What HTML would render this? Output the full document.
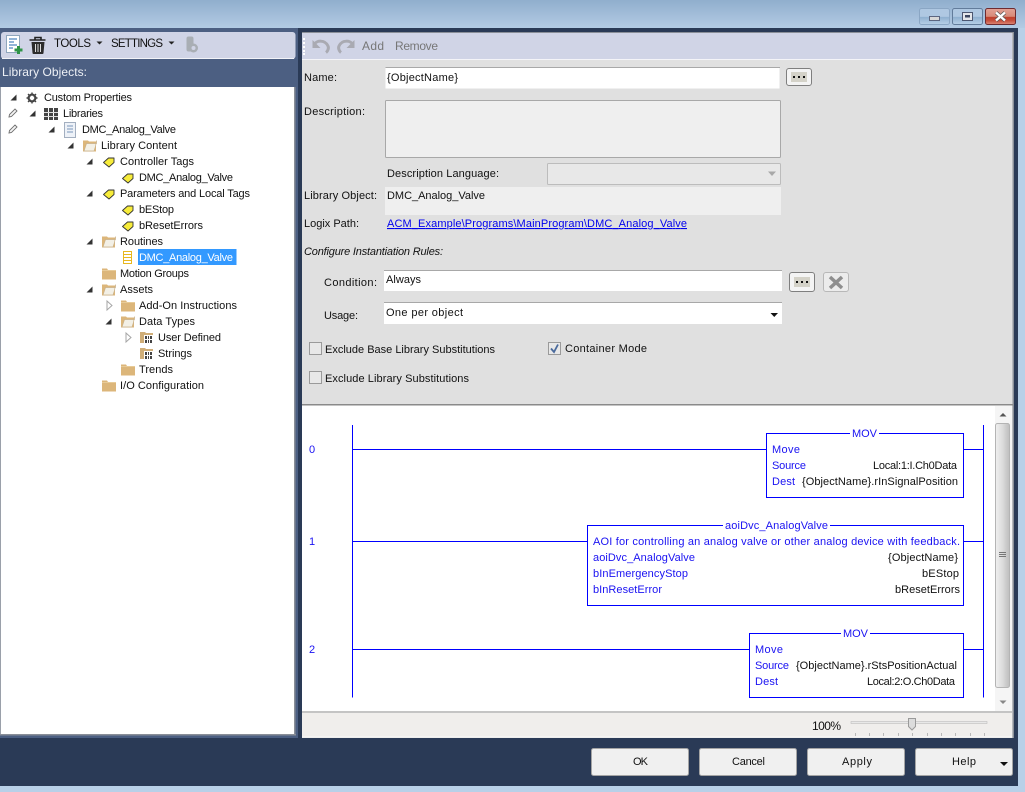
<!DOCTYPE html>
<html><head><meta charset="utf-8"><style>
html,body{margin:0;padding:0;width:1025px;height:792px;overflow:hidden;background:#b8d0e8}
svg{display:block}
text{font-family:"Liberation Sans",sans-serif;font-size:11px;fill:#111;white-space:pre}
.b{fill:#1a12f2}
.g{fill:#777}
.w{fill:#fff}
.m{font-size:12px}
.s{font-size:11.500px}
</style></head><body>
<svg width="1025" height="792" viewBox="0 0 1025 792" xmlns="http://www.w3.org/2000/svg">
<defs>
<linearGradient id="tb" x1="0" y1="0" x2="0" y2="1"><stop offset="0" stop-color="#90aecd"/><stop offset="1" stop-color="#b3cbe4"/></linearGradient>
<linearGradient id="sb" x1="0" y1="0" x2="1" y2="0"><stop offset="0" stop-color="#f0f0f0"/><stop offset=".5" stop-color="#dcdcdc"/><stop offset="1" stop-color="#bdbdbd"/></linearGradient>
<linearGradient id="wb" x1="0" y1="0" x2="0" y2="1"><stop offset="0" stop-color="#afc8e2"/><stop offset=".5" stop-color="#afc8e2"/><stop offset=".55" stop-color="#8fb0d0"/><stop offset="1" stop-color="#b8d0e8"/></linearGradient>
<linearGradient id="cb" x1="0" y1="0" x2="0" y2="1"><stop offset="0" stop-color="#e2a296"/><stop offset=".5" stop-color="#d88a78"/><stop offset=".55" stop-color="#bf3f2c"/><stop offset=".75" stop-color="#c54f3c"/><stop offset="1" stop-color="#dd8a78"/></linearGradient>
<g id="fc"><path d="M0 2.500h5l1 1.500h8v9.500H0z" fill="#dcb67a"/><path d="M0 4.500h14" stroke="#e8cb98" stroke-width="1"/></g>
<g id="fo"><path d="M0 2.500h5l1 1h7v10H0z" fill="#dcb67a"/><path d="M3.500 5.500h10v-3l-1 6-1.500 4.500H1z" fill="#f3f0e6" stroke="#c9b088" stroke-width=".7"/></g>
<g id="tag"><path d="M0.500 7.500 5.500 3h5.500v4.500L6 12z" fill="#f7ec3a" stroke="#333" stroke-width=".9" stroke-linejoin="round"/></g>
<path id="ex" d="M-3.500 3.500 2.500 3.500 2.500-2.500z" fill="#333"/>
<path id="hx" d="M-2 -4 3 0.500 -2 5z" fill="#fff" stroke="#a6a6a6"/>
<g id="fd"><path d="M0 2h5l1 1h7v10H0z" fill="#d0ae78"/><rect x="4" y="5" width="10" height="9" fill="#fff"/><g fill="#444"><rect x="5" y="6" width="2" height="3"/><rect x="8" y="6" width="1" height="3"/><rect x="10" y="6" width="2" height="3"/><rect x="5" y="10" width="2" height="3"/><rect x="8" y="10" width="1" height="3"/><rect x="10" y="10" width="2" height="3"/></g></g>
<g id="pen"><path d="M-4 4-3.500 1.500 2-4 4-2-1.500 3.500z" fill="#f4f4f4" stroke="#707070" stroke-width=".9"/></g>
<g id="dots" fill="#111"><rect x="-6" y="-1" width="2" height="2"/><rect x="-1" y="-1" width="2" height="2"/><rect x="4" y="-1" width="2" height="2"/></g>
</defs>

<!-- window frame -->
<rect width="1025" height="28" fill="url(#tb)"/>
<rect y="28" width="1025" height="764" fill="#b8d0e8"/>
<rect y="28" width="1018" height="758" fill="#2a3a56"/>
<rect y="28" width="298" height="710" fill="#4c5f82"/>

<!-- window buttons -->
<rect x="919.500" y="8.500" width="30" height="16" rx="2" fill="url(#wb)" stroke="#8aa6c4"/>
<rect x="929.500" y="16.500" width="10" height="4" fill="#d8d8d8" stroke="#5c6680"/>
<rect x="952.500" y="8.500" width="30" height="16" rx="2" fill="url(#wb)" stroke="#627c9b"/>
<rect x="962.500" y="12.500" width="10" height="8" fill="#e4e6ea" stroke="#4c5670"/><rect x="965" y="15" width="5" height="2.500" fill="#3c4660"/>
<rect x="985.500" y="8.500" width="30" height="16" rx="2" fill="url(#cb)" stroke="#6e2b30"/>
<path d="M996 12.500 1005 20.500M1005 12.500 996 20.500" stroke="#555" stroke-width="3.800"/>
<path d="M996 12.500 1005 20.500M1005 12.500 996 20.500" stroke="#fff" stroke-width="2.400"/>

<!-- left toolbar -->
<rect x="1" y="32" width="294.500" height="27" rx="3" fill="#d0d4e6"/>
<path d="M2 58.500H294" stroke="#f2f3f8"/>
<rect x="6.500" y="35.500" width="13" height="17" fill="#fff" stroke="#8fa6bd"/>
<path d="M9 39h8M9 42h5M9 45h8M9 48h4" stroke="#4f86c0" stroke-width="1.300"/>
<path d="M14.500 50h8M18.500 46v8" stroke="#2e9347" stroke-width="3"/>
<path d="M29.500 40h16M35 40v-2.500h6V40" stroke="#222" stroke-width="1.600" fill="none"/>
<path d="M31.500 42h13l-1 11a1 1 0 0 1-1 1H33.500a1 1 0 0 1-1-1z" fill="#2c2c2c"/>
<path d="M35.500 44v8M38 44v8M40.500 44v8" stroke="#ddd" stroke-width="1"/>
<text x="54" y="47" textLength="37" class="s">TOOLS</text>
<path d="M96.500 41.500h6l-3 3z" fill="#222"/>
<text x="111" y="47" textLength="52" class="s">SETTINGS</text>
<path d="M168.500 41.500h6l-3 3z" fill="#222"/>
<rect x="186.500" y="36.500" width="7" height="15" rx="2" fill="#a9aeb4"/>
<circle cx="193.500" cy="48" r="4.500" fill="#a9aeb4"/><circle cx="193.500" cy="48" r="2" fill="#d0d4e6"/>
<text x="2" y="76" textLength="85" class="m" style="fill:#eef1f6">Library Objects:</text>

<!-- tree panel -->
<rect x="0" y="87" width="1" height="647" fill="#9aa0aa"/>
<rect x="1" y="87" width="293" height="647" fill="#fff"/>
<rect x="294" y="87" width="1.500" height="647" fill="#8a8f98"/>
<rect x="0" y="734" width="296" height="1.500" fill="#8a8f98"/>

<use href="#ex" x="14" y="97"/>
<circle cx="32" cy="98" r="3.500" fill="none" stroke="#444" stroke-width="2"/>
<path d="M32 92.500v11M26.500 98h11M28 94l8 8M36 94l-8 8" stroke="#444" stroke-width="1.400"/>
<circle cx="32" cy="98" r="2.200" fill="#fff"/>
<text x="44" y="101" textLength="88">Custom Properties</text>

<use href="#pen" x="13" y="113"/>
<use href="#ex" x="33" y="113"/>
<g fill="#444"><rect x="44" y="108" width="4" height="12"/><rect x="49" y="108" width="4" height="12"/><rect x="54" y="108" width="4" height="12"/></g>
<path d="M44 112.500h14M44 116.500h14" stroke="#ddd" stroke-width="1"/>
<text x="63" y="117" textLength="40">Libraries</text>

<use href="#pen" x="13" y="129"/>
<use href="#ex" x="52" y="129"/>
<rect x="64.500" y="122.500" width="11" height="15" fill="#eef2f8" stroke="#a3afc0"/>
<path d="M67 126h6M67 129h6M67 132h6" stroke="#7a96ba"/>
<text x="82" y="133" textLength="94">DMC_Analog_Valve</text>

<use href="#ex" x="71" y="145"/><use href="#fo" x="83" y="138"/>
<text x="101" y="149" textLength="76">Library Content</text>

<use href="#ex" x="90" y="161"/><use href="#tag" x="103" y="155"/>
<text x="120" y="165" textLength="74">Controller Tags</text>
<use href="#tag" x="122" y="171"/>
<text x="139" y="181" textLength="94">DMC_Analog_Valve</text>

<use href="#ex" x="90" y="193"/><use href="#tag" x="103" y="187"/>
<text x="120" y="197" textLength="130">Parameters and Local Tags</text>
<use href="#tag" x="122" y="203"/>
<text x="139" y="213" textLength="35">bEStop</text>
<use href="#tag" x="122" y="219"/>
<text x="139" y="229" textLength="64">bResetErrors</text>

<use href="#ex" x="90" y="241"/><use href="#fo" x="102" y="234"/>
<text x="120" y="245" textLength="43">Routines</text>
<path d="M123.500 251.500h8v12h-8zM123.500 254.500h8M123.500 257.500h8M123.500 260.500h8" fill="none" stroke="#e8b820" stroke-width="1"/>
<rect x="138" y="249" width="98.500" height="16" fill="#3399ff"/>
<text x="139" y="261" textLength="94" class="w">DMC_Analog_Valve</text>

<use href="#fc" x="102" y="266"/>
<text x="120" y="277" textLength="69">Motion Groups</text>

<use href="#ex" x="90" y="289"/><use href="#fo" x="102" y="282"/>
<text x="120" y="293" textLength="33">Assets</text>

<use href="#hx" x="109" y="305"/><use href="#fc" x="121" y="298"/>
<text x="139" y="309" textLength="98">Add-On Instructions</text>

<use href="#ex" x="109" y="321"/><use href="#fo" x="121" y="314"/>
<text x="139" y="325" textLength="56">Data Types</text>

<use href="#hx" x="128" y="337"/><use href="#fd" x="140" y="330"/>
<text x="158" y="341" textLength="63">User Defined</text>
<use href="#fd" x="140" y="346"/>
<text x="158" y="357" textLength="34">Strings</text>
<use href="#fc" x="121" y="362"/>
<text x="139" y="373" textLength="34">Trends</text>
<use href="#fc" x="102" y="378"/>
<text x="120" y="389" textLength="84">I/O Configuration</text>

<!-- right panel -->
<rect x="302" y="32" width="711.500" height="706" fill="#e0e0e0"/>
<rect x="302" y="32" width="711.500" height="1" fill="#8a8f98"/>
<rect x="1012.500" y="32" width="1.500" height="706" fill="#8a8f98"/>
<rect x="302" y="33" width="710" height="26" fill="#d0d4e6"/>
<rect x="302" y="59" width="710" height="1" fill="#f4f4f8"/>
<g fill="#fff"><rect x="303" y="38" width="2" height="2"/><rect x="303" y="42" width="2" height="2"/><rect x="303" y="46" width="2" height="2"/><rect x="303" y="50" width="2" height="2"/><rect x="303" y="53" width="2" height="2"/></g>
<path d="M314 45c2-5 11-5.500 14 1 1 2 0 5-2 6.500" fill="none" stroke="#a9aab2" stroke-width="3"/>
<path d="M312.500 40v8h8z" fill="#a9aab2"/>
<path d="M353 45c-2-5-11-5.500-14 1-1 2 0 5 2 6.500" fill="none" stroke="#a9aab2" stroke-width="3"/>
<path d="M354.500 40v8h-8z" fill="#a9aab2"/>
<text x="362" y="50" textLength="22" class="g m">Add</text>
<text x="395" y="50" textLength="43" class="g m">Remove</text>

<!-- form -->
<text x="304" y="81" textLength="33">Name:</text>
<rect x="385.500" y="67.500" width="394" height="21" fill="#fff"/><path d="M385.500 67.500H780" stroke="#a8a8a8"/>
<text x="387" y="81" textLength="71">{ObjectName}</text>
<rect x="786.500" y="68.500" width="25" height="17" rx="2.500" fill="#f4f4f4" stroke="#7f7f7f"/>
<rect x="791" y="72" width="16" height="10" fill="#d4d2c8"/><use href="#dots" x="799" y="77"/>

<text x="304" y="115" textLength="61">Description:</text>
<rect x="385.500" y="100.500" width="395" height="57" rx="1" fill="#efefef" stroke="#a8a8a8"/>
<text x="387" y="177" textLength="112">Description Language:</text>
<rect x="547.500" y="163.500" width="233" height="21" rx="1" fill="#e8e8e8" stroke="#bcbcbc"/>
<path d="M768 171.500h8l-4 4.500z" fill="#a8a8a8"/>
<text x="304" y="199" textLength="73">Library Object:</text>
<rect x="385" y="187" width="396" height="28" fill="#efefef"/>
<text x="387" y="199" textLength="98">DMC_Analog_Valve</text>
<text x="304" y="227" textLength="55">Logix Path:</text>
<text x="387" y="227" textLength="300" style="fill:#0000ee;text-decoration:underline">ACM_Example\Programs\MainProgram\DMC_Analog_Valve</text>
<text x="304" y="255" textLength="139" style="font-style:italic">Configure Instantiation Rules:</text>

<text x="324" y="286" textLength="53">Condition:</text>
<rect x="384" y="270" width="398" height="21" fill="#fff"/><path d="M384 270.500H782" stroke="#a8a8a8"/>
<text x="386" y="283" textLength="35">Always</text>
<rect x="789.500" y="272.500" width="25" height="19" rx="2.500" fill="#f4f4f4" stroke="#7f7f7f"/>
<rect x="794" y="277" width="16" height="10" fill="#d4d2c8"/><use href="#dots" x="802" y="282"/>
<rect x="823.500" y="272.500" width="25" height="19" rx="2.500" fill="#ececec" stroke="#b8b8b8"/>
<path d="M830 277 842 288M842 277 830 288" stroke="#8e8e8e" stroke-width="3.500"/>

<text x="324" y="319" textLength="34">Usage:</text>
<rect x="384" y="302" width="398" height="22" fill="#fff"/><path d="M384 302.500H782" stroke="#a8a8a8"/>
<text x="386" y="316" textLength="77">One per object</text>
<path d="M770.500 313h7.500l-3.750 4z" fill="#111"/>

<rect x="309.500" y="342.500" width="12" height="12" fill="#e8e8e8" stroke="#9a9a9a"/>
<text x="325" y="353" textLength="170">Exclude Base Library Substitutions</text>
<rect x="548.500" y="342.500" width="12" height="12" fill="#e8e8e8" stroke="#9a9a9a"/>
<path d="M551 348.500 554 352 558 344.500" fill="none" stroke="#4a6a9c" stroke-width="1.800"/>
<text x="565" y="352" textLength="82">Container Mode</text>
<rect x="309.500" y="371.500" width="12" height="12" fill="#e8e8e8" stroke="#9a9a9a"/>
<text x="325" y="382" textLength="144">Exclude Library Substitutions</text>

<!-- ladder -->
<rect x="302" y="404" width="711" height="1.500" fill="#8a8a8a"/>
<rect x="302" y="405.500" width="710" height="306" fill="#fff"/>
<rect x="302" y="711" width="710" height="2" fill="#c4c4c4"/>
<rect x="302" y="713" width="710" height="24" fill="#f0eeec"/>
<rect x="302" y="736.500" width="710" height="1" fill="#fafafa"/>

<!-- scrollbar -->
<rect x="995" y="406" width="17" height="305" fill="#f5f5f5"/>
<path d="M999.500 416.500h7l-3.500-3.500z" fill="#555"/>
<rect x="995.500" y="423.500" width="14" height="264" rx="2" fill="url(#sb)" stroke="#b4b4b4"/>
<path d="M999 552.500h7M999 554.500h7M999 556.500h7" stroke="#777"/>
<path d="M999.500 700.500h7l-3.500 3.500z" fill="#888"/>

<g fill="none" stroke="#0000ff" stroke-width="1">
<path d="M352.500 425v272.500M983.500 425v272.500"/>
<path d="M352.500 449.500H766M964 449.500h19.500M352.500 541.500H587M964 541.500h19.500M352.500 649.500H749M964 649.500h19.500"/>
<rect x="766.500" y="433.500" width="197" height="64"/>
<rect x="587.500" y="525.500" width="376" height="80"/>
<rect x="749.500" y="633.500" width="214" height="64"/>
</g>
<rect x="850" y="430" width="29" height="7" fill="#fff"/>
<rect x="723" y="522" width="107" height="7" fill="#fff"/>
<rect x="841" y="630" width="29" height="7" fill="#fff"/>

<text x="309" y="453" textLength="6" class="b">0</text>
<text x="309" y="545" textLength="6" class="b">1</text>
<text x="309" y="653" textLength="6" class="b">2</text>

<text x="852" y="437" textLength="25" class="b">MOV</text>
<text x="772" y="453" textLength="28" class="b">Move</text>
<text x="772" y="469" textLength="34" class="b">Source</text>
<text x="772" y="485" textLength="23" class="b">Dest</text>
<text x="873" y="469" textLength="84">Local:1:I.Ch0Data</text>
<text x="802" y="485" textLength="156">{ObjectName}.rInSignalPosition</text>

<text x="725" y="529" textLength="103" class="b">aoiDvc_AnalogValve</text>
<text x="593" y="545" textLength="367" class="b">AOI for controlling an analog valve or other analog device with feedback.</text>
<text x="593" y="561" textLength="102" class="b">aoiDvc_AnalogValve</text>
<text x="888" y="561" textLength="70">{ObjectName}</text>
<text x="593" y="577" textLength="95" class="b">bInEmergencyStop</text>
<text x="922" y="577" textLength="37">bEStop</text>
<text x="593" y="593" textLength="69" class="b">bInResetError</text>
<text x="895" y="593" textLength="65">bResetErrors</text>

<text x="843" y="637" textLength="25" class="b">MOV</text>
<text x="755" y="653" textLength="28" class="b">Move</text>
<text x="755" y="669" textLength="34" class="b">Source</text>
<text x="755" y="685" textLength="23" class="b">Dest</text>
<text x="796" y="669" textLength="161">{ObjectName}.rStsPositionActual</text>
<text x="867" y="685" textLength="88">Local:2:O.Ch0Data</text>

<!-- zoom -->
<text x="812" y="730" textLength="29" class="m">100%</text>
<rect x="851" y="721.500" width="136" height="2" fill="#e8e8e8" stroke="#bdbdbd" stroke-width=".6"/>
<path d="M908.500 718.500h7v8l-3.500 3.500-3.500-3.500z" fill="#dcdcdc" stroke="#9a9a9a"/>
<path d="M855.500 733v3M869.500 733v3M883.500 733v3M898.500 733v3M912.500 733v3M927.500 733v3M941.500 733v3M955.500 733v3M970.500 733v3M984.500 733v3" stroke="#b8b8b8"/>

<!-- bottom buttons -->
<g fill="#f0f0f0" stroke="#a4a4a4">
<rect x="591.500" y="748.500" width="97" height="27" rx="2"/>
<rect x="699.500" y="748.500" width="97" height="27" rx="2"/>
<rect x="807.500" y="748.500" width="97" height="27" rx="2"/>
<rect x="915.500" y="748.500" width="97" height="27" rx="2"/>
</g>
<text x="633" y="765" textLength="15">OK</text>
<text x="732" y="765" textLength="33">Cancel</text>
<text x="842" y="765" textLength="30">Apply</text>
<text x="952" y="765" textLength="24">Help</text>
<path d="M1000 762h8l-4 4z" fill="#111"/>
</svg>
</body></html>
